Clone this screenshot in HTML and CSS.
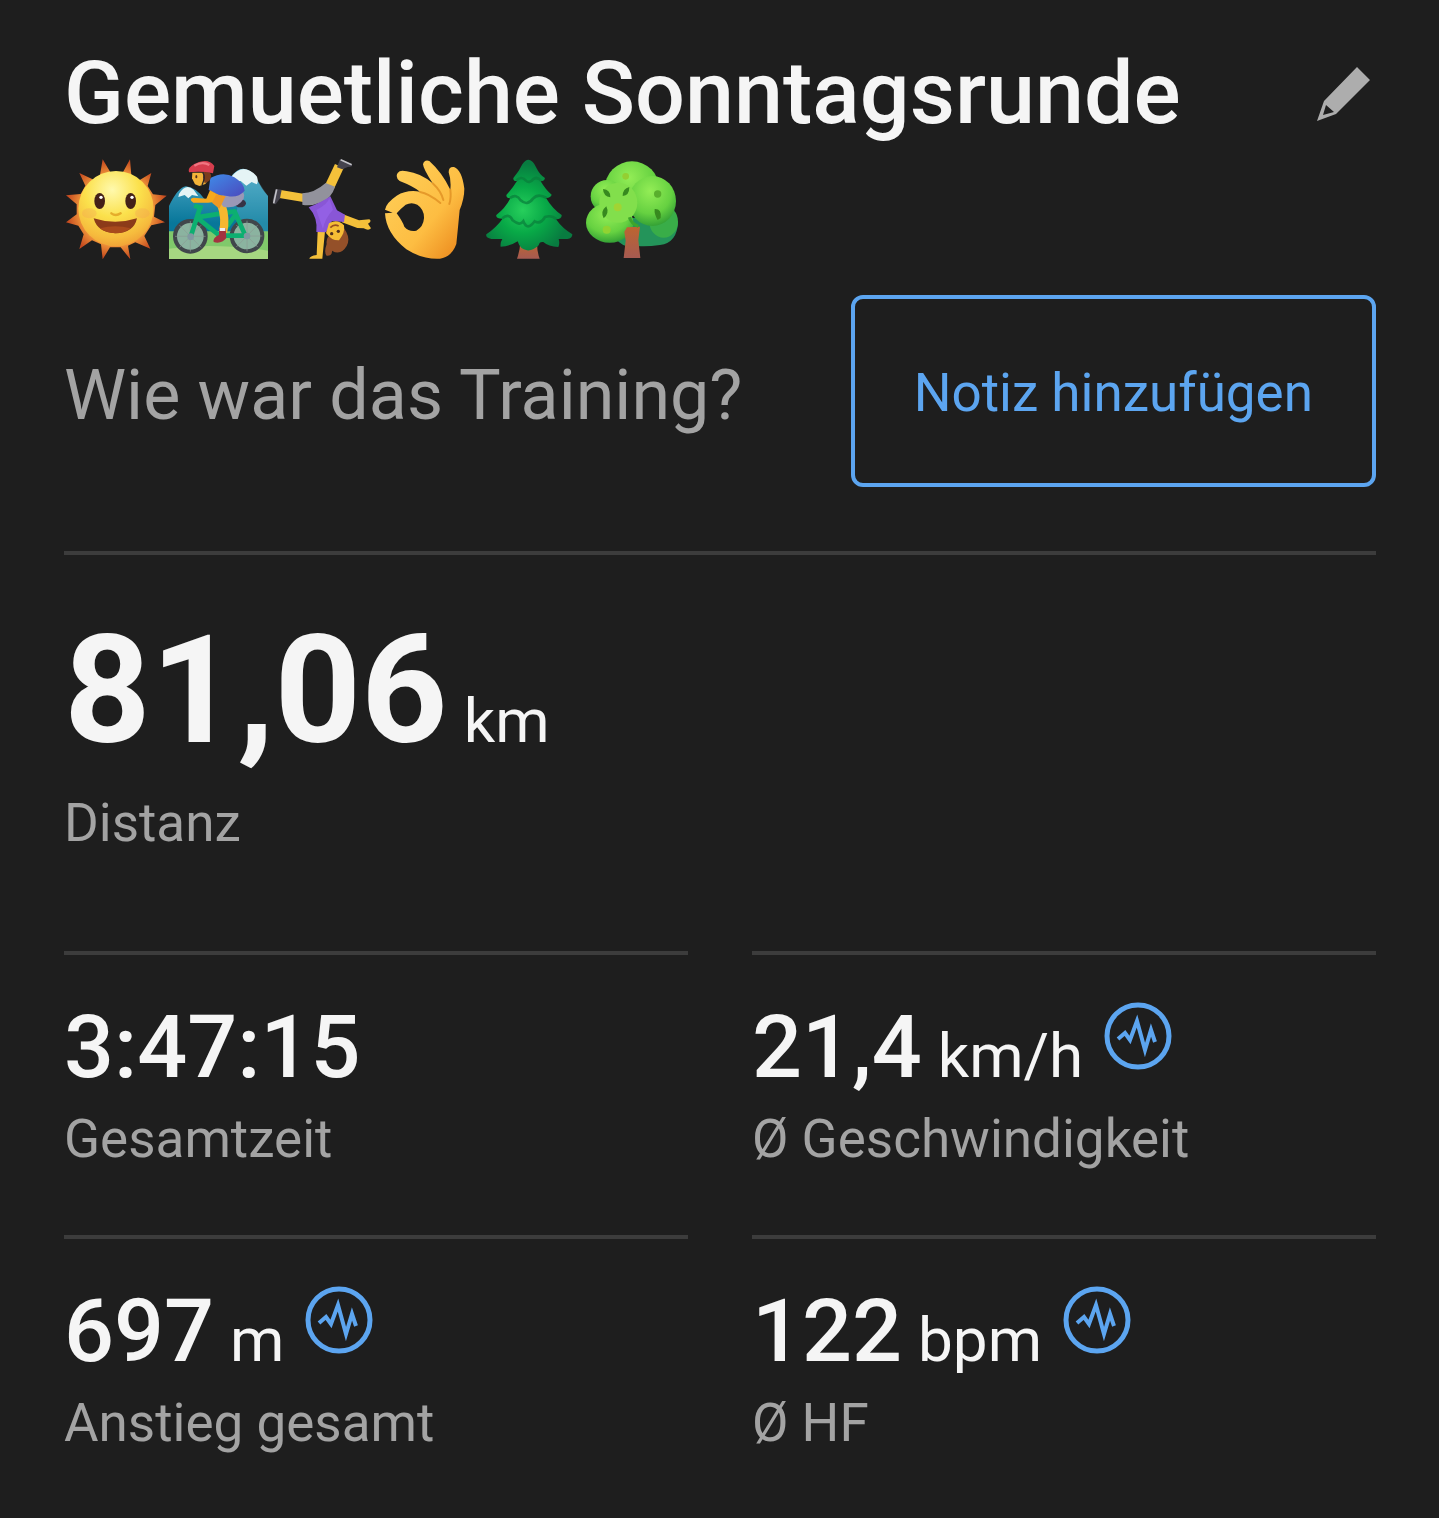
FILE: index.html
```html
<!DOCTYPE html>
<html lang="de">
<head>
<meta charset="utf-8">
<meta name="viewport" content="width=device-width, initial-scale=1">
<title>Gemuetliche Sonntagsrunde</title>
<link rel="stylesheet" href="styles.css">
</head>
<body>
<svg class="defs" aria-hidden="true">
  <defs>
    <radialGradient id="sun" cx=".45" cy=".25" r=".8"><stop offset="0" stop-color="#fff9ad"/><stop offset=".45" stop-color="#fbe14c"/><stop offset=".8" stop-color="#f6bb3d"/><stop offset="1" stop-color="#ee9a35"/></radialGradient>
    <radialGradient id="rays" cx=".5" cy=".5" r=".5"><stop offset=".7" stop-color="#f39a3c"/><stop offset="1" stop-color="#c4491f"/></radialGradient>
    <linearGradient id="mountain" x1="0" y1="0" x2="0" y2="1"><stop offset="0" stop-color="#4fa9c8"/><stop offset=".6" stop-color="#08779a"/></linearGradient>
    <linearGradient id="shirt" x1="0" y1="0" x2="1" y2="1"><stop offset="0" stop-color="#3f8be8"/><stop offset="1" stop-color="#4b49bd"/></linearGradient>
    <linearGradient id="hand" x1="0" y1="0" x2="1" y2="1"><stop offset="0" stop-color="#ffd25c"/><stop offset=".6" stop-color="#fdbd42"/><stop offset="1" stop-color="#e98218"/></linearGradient>
    <radialGradient id="fir" gradientUnits="userSpaceOnUse" cx="140" cy="180" r="140"><stop offset="0" stop-color="#27cf5c"/><stop offset=".5" stop-color="#08a947"/><stop offset="1" stop-color="#087b40"/></radialGradient>
    <radialGradient id="leaf" cx=".45" cy=".3" r=".7"><stop offset="0" stop-color="#93ed56"/><stop offset=".65" stop-color="#66d141"/><stop offset="1" stop-color="#35a235"/></radialGradient>
    <linearGradient id="trunk" x1="0" y1="0" x2="0" y2="1"><stop offset="0" stop-color="#bd6530"/><stop offset="1" stop-color="#a65a51"/></linearGradient>
    <symbol id="pulse" viewBox="0 0 68 68">
      <g fill="none" stroke="#5ca5f0">
        <circle cx="34" cy="34" r="31" stroke-width="5"/>
        <path d="M14 37L21 31 26 38 33 19 41 48 47 28 51 40" stroke-width="4" stroke-miterlimit="8"/>
      </g>
    </symbol>
  </defs>
</svg>

<main class="workout">
  <header class="head">
    <div class="heading">
      <h1 class="title">Gemuetliche Sonntagsrunde</h1>
      <div class="emojis">
        <svg class="emoji" viewBox="12 18 309 312" role="img" aria-label="Sonne mit Gesicht">
          <path fill="url(#rays)" d="M128 28L152 68 188 68 210 28 214 76 238 91 274 69 263 108 279 133 320 137 286 165 282 200 315 217 274 226 253 258 271 296 226 277 204 287 211 328 182 292 150 292 128 328 123 283 96 271 58 297 71 253 55 227 18 217 50 193 50 163 18 136 62 132 76 107 58 69 101 89 120 75Z"/>
          <circle cx="168" cy="176" r="113" fill="url(#sun)"/>
          <ellipse cx="88" cy="190" rx="22" ry="15" fill="#f2a055" opacity=".3"/><ellipse cx="247" cy="190" rx="22" ry="15" fill="#f2a055" opacity=".3"/>
          <ellipse cx="119" cy="153" rx="16" ry="24" fill="#432018"/><ellipse cx="212" cy="153" rx="16" ry="24" fill="#432018"/>
          <circle cx="123" cy="142" r="5" fill="#fff"/><circle cx="216" cy="142" r="5" fill="#fff"/>
          <path d="M154 190q13 10 28 0" fill="none" stroke="#e5ad2b" stroke-width="7" stroke-linecap="round"/>
          <path d="M101 205Q165 226 231 205Q222 249 166 250Q112 248 101 205Z" fill="#8c3b19"/>
          <path d="M120 235Q166 222 211 235Q195 250 166 250Q136 249 120 235Z" fill="#a84a1c"/>
        </svg>
        <svg class="emoji" viewBox="9 18 309 312" role="img" aria-label="Mountainbiker">
          <path fill="url(#mountain)" d="M15 168Q42 112 66 109Q96 112 122 148Q165 137 200 82Q233 34 273 76Q293 119 312 138V327H15Z"/>
          <path fill="#79c8d8" opacity=".25" d="M238 64L214 210 312 250V138Q285 100 273 76Z"/>
          <path fill="#e5f4f5" d="M202 80Q239 34 279 80Q284 97 278 103L263 96 247 107 230 93 211 92ZM45 132Q65 98 89 119L103 139 84 135 73 145 62 135 43 141Z"/>
          <path fill="#80c96b" d="M15 244H312V327H15Z"/><path fill="#a6d781" d="M15 296Q150 278 312 302V327H15Z"/>
          <circle cx="79" cy="259" r="46" fill="#8bb3a0" stroke="#40464b" stroke-width="12"/><circle cx="249" cy="258" r="46" fill="#8bb3a0" stroke="#40464b" stroke-width="12"/>
          <path d="M79 213V305M33 259H125M47 226L111 292M111 226L47 292M249 212V304M203 258H295M217 225L281 291M281 225L217 291" stroke="#8b9b94" stroke-width="2"/>
          <path d="M80 260L109 170M98 202L168 258 215 194M98 202L212 184 244 257H170M90 167L116 174" fill="none" stroke="#0caf70" stroke-width="14" stroke-linejoin="round"/>
          <ellipse cx="229" cy="160" rx="17" ry="12" fill="#373346"/><circle cx="80" cy="260" r="10" fill="#8199a1"/><circle cx="249" cy="258" r="10" fill="#8199a1"/>
          <path d="M206 150Q179 150 172 164Q187 206 177 246" fill="none" stroke="#f6b72f" stroke-width="25"/>
          <path d="M180 128Q250 108 239 146Q220 178 178 170Q160 154 180 128Z" fill="#9a98b6"/>
          <path d="M139 84Q178 62 211 82Q240 100 242 122Q222 145 190 138L161 134 134 120Z" fill="url(#shirt)"/>
          <path d="M138 121L163 134Q162 158 132 158L88 158Q72 147 88 143L127 146Z" fill="#f6a91d"/><path d="M157 133L185 139 166 176 144 158Z" fill="#ee9925"/>
          <path d="M85 68H130L134 88 124 102 106 108 93 103 84 85Z" fill="#f4b439"/><path d="M120 66Q152 64 136 92L122 100 117 82Z" fill="#7b3d1d"/>
          <ellipse cx="97" cy="80" rx="3" ry="5" fill="#51301e"/>
          <path d="M75 67Q70 53 91 42Q132 21 151 48L147 70Q113 63 75 67Z" fill="#d63e4e"/><path d="M91 47Q115 33 136 45" fill="none" stroke="#f07682" stroke-width="7"/>
          <path d="M116 67Q126 80 114 105" fill="none" stroke="#26242b" stroke-width="4"/>
          <path d="M165 235H185L187 264Q172 283 149 276Q145 264 165 254Z" fill="#a33440"/><path d="M167 234H184V243H167Z" fill="#eee"/>
        </svg>
        <svg class="emoji" viewBox="6 18 309 312" role="img" aria-label="Radschlagende Person">
          <path d="M185 110L214 48" stroke="#f4c13a" stroke-width="29"/><path d="M108 144L36 132" stroke="#f4c13a" stroke-width="25"/>
          <path d="M103 130Q139 129 173 99L201 110Q191 146 156 158Q125 170 103 164Z" fill="#92929c"/>
          <path d="M207 52L216 28 251 42Q257 51 239 51L223 58Z" fill="#45434d"/><path d="M218 29L251 44" stroke="#c4c4c9" stroke-width="5"/>
          <path d="M41 119L36 145 23 163Q12 162 15 147L23 117Z" fill="#45434d"/><path d="M26 118L17 160" stroke="#c4c4c9" stroke-width="5"/>
          <path d="M225 193L273 211 304 208Q313 214 300 221L309 235Q302 243 287 235L268 234 222 217Z" fill="#f4c03a"/>
          <path d="M149 244H171L163 326H124Q125 318 146 315Z" fill="#f4c03a"/>
          <path d="M122 172Q162 156 187 139L207 181 231 194 228 216 192 213 174 247 145 246Q150 203 122 172Z" fill="#8956d6"/><path d="M145 180Q178 164 184 145L195 179Q169 207 165 237Z" fill="#9a68ec" opacity=".6"/>
          <path d="M218 224Q252 258 236 288Q218 318 192 302Q193 319 176 317Q167 308 176 282Q173 259 193 252Z" fill="#945029"/>
          <path d="M183 220Q208 205 228 226Q232 248 213 271Q190 272 174 249Z" fill="#f6bd35"/>
          <circle cx="191" cy="251" r="5" fill="#51301e"/><circle cx="211" cy="244" r="5" fill="#51301e"/><path d="M187 233Q198 221 212 228" fill="none" stroke="#9b4f20" stroke-width="5"/>
        </svg>
        <svg class="emoji" viewBox="3 18 309 312" role="img" aria-label="OK-Hand">
          <path fill="url(#hand)" fill-rule="evenodd" d="M39 179Q42 159 74 137Q105 118 144 125Q122 108 83 93Q69 82 77 69Q84 58 104 64Q145 69 182 100Q154 57 153 43Q157 28 172 33Q210 67 235 119Q238 91 230 67Q230 49 246 51Q270 60 277 116Q277 146 263 180Q259 223 253 282Q239 321 204 326Q151 329 103 298Q42 250 39 190L62 188ZM74 190Q88 174 101 164Q119 155 136 164Q157 178 156 205Q154 231 133 242Q112 247 97 230Q91 213 74 190Z"/>
          <path d="M144 126Q170 130 205 159M182 100Q207 123 214 150M235 119Q238 144 232 162" fill="none" stroke="#de8c20" stroke-width="6" stroke-linecap="round" opacity=".75"/>
        </svg>
        <svg class="emoji" viewBox="0 18 309 312" role="img" aria-label="Tanne">
          <path d="M133 275H183Q183 307 191 326H123Q132 302 133 275Z" fill="url(#trunk)"/>
          <path fill="url(#fir)" d="M158 29Q171 30 181 53Q191 74 207 84Q205 94 194 94Q210 121 227 134Q225 143 210 144Q230 177 257 195Q258 206 240 208Q259 235 289 253Q289 265 274 267H248Q252 280 247 291Q217 289 202 276Q190 274 188 286Q171 303 153 301Q132 298 125 274Q102 289 74 290Q72 278 79 267H46Q28 264 31 253Q61 232 80 206Q58 206 61 195Q88 174 103 145Q91 145 91 135Q109 116 123 93Q111 94 112 84Q129 65 139 43Q147 29 158 29Z"/>
          <path d="M121 91Q137 77 149 91Q160 102 171 88Q183 78 196 93M102 144Q121 130 134 151Q154 169 171 146Q186 129 212 144M79 205Q99 188 110 211Q132 229 142 214Q154 244 176 214Q194 224 207 201Q227 194 242 208" fill="none" stroke="#087e3b" stroke-width="8" opacity=".7"/>
        </svg>
        <svg class="emoji" viewBox="9 18 309 312" role="img" aria-label="Laubbaum">
          <path fill="#24945a" d="M118 204H268L306 215Q304 278 252 285Q212 291 184 288Q145 299 118 265Z"/>
          <circle cx="168" cy="116" r="82" fill="url(#leaf)"/><circle cx="93" cy="139" r="49" fill="url(#leaf)"/><ellipse cx="101" cy="218" rx="71" ry="60" fill="url(#leaf)"/>
          <ellipse cx="263" cy="215" rx="43" ry="48" fill="#39ad48"/><ellipse cx="229" cy="153" rx="71" ry="75" fill="url(#leaf)"/>
          <ellipse cx="127" cy="158" rx="57" ry="60" fill="#82df4c"/>
          <path d="M145 245L153 232 192 230 187 270 193 324H143L149 272Z" fill="url(#trunk)"/>
          <path d="M81 117Q104 119 103 142Q82 139 81 117ZM160 111Q140 116 140 138Q160 137 160 111ZM91 169Q72 184 83 205Q101 190 91 169ZM236 177Q258 176 254 204L245 210Q234 192 236 177Z" fill="#37891f"/>
          <circle cx="245" cy="132" r="11" fill="#59af2d"/><circle cx="149" cy="79" r="10" fill="#94cf32"/><circle cx="125" cy="172" r="12" fill="#a1d434"/><circle cx="92" cy="239" r="12" fill="#91d332"/><path d="M160 202Q167 223 187 229" fill="none" stroke="#3da52b" stroke-width="9"/>
        </svg>
      </div>
    </div>
    <button class="edit" type="button" aria-label="Bearbeiten">
      <svg class="pencil" viewBox="0 0 54 54" aria-hidden="true"><path fill="#adadad" fill-rule="evenodd" d="M40 0L53 13 19 47 0 54 7 34ZM9 38L6 48 17 45Z"/></svg>
    </button>
  </header>

  <section class="note">
    <h2 class="question">Wie war das Training?</h2>
    <button class="add-note" type="button">Notiz hinzufügen</button>
  </section>

  <section class="distance">
    <p class="value total">81,06 <span class="unit">km</span></p>
    <p class="label">Distanz</p>
  </section>

  <section class="stats">
    <div class="stat">
      <p class="value">3:47:15</p>
      <p class="label">Gesamtzeit</p>
    </div>
    <div class="stat">
      <div class="reading"><p class="value">21,4 <span class="unit">km/h</span></p><button class="chart" type="button" aria-label="Geschwindigkeit anzeigen"><svg class="pulse" aria-hidden="true"><use href="#pulse"/></svg></button></div>
      <p class="label">Ø Geschwindigkeit</p>
    </div>
    <div class="stat">
      <div class="reading"><p class="value">697 <span class="unit">m</span></p><button class="chart" type="button" aria-label="Anstieg anzeigen"><svg class="pulse" aria-hidden="true"><use href="#pulse"/></svg></button></div>
      <p class="label">Anstieg gesamt</p>
    </div>
    <div class="stat">
      <div class="reading"><p class="value">122 <span class="unit">bpm</span></p><button class="chart" type="button" aria-label="Herzfrequenz anzeigen"><svg class="pulse" aria-hidden="true"><use href="#pulse"/></svg></button></div>
      <p class="label">Ø HF</p>
    </div>
  </section>
</main>
</body>
</html>
```
FILE: styles.css
```css
* { box-sizing: border-box; }

body {
  margin: 0;
  background: #1e1e1e;
  color: #f5f5f5;
  font-family: Roboto, "Liberation Sans", sans-serif;
}

h1, h2, p { margin: 0; }

button {
  padding: 0;
  border: 0;
  background: none;
  font-family: inherit;
  cursor: pointer;
}

svg { display: block; }

.defs { position: absolute; width: 0; height: 0; }

.workout { padding: 40px 63px 0 64px; }

.head {
  display: flex;
  justify-content: space-between;
  align-items: flex-start;
}

.title {
  font-size: 88px;
  font-weight: 500;
  line-height: 106px;
}

.emojis { display: flex; padding-top: 10px; }

.emoji { width: 103px; height: 104px; }

.edit { padding: 27px 5px; }

.pencil { width: 54px; height: 54px; }

.note {
  display: flex;
  justify-content: space-between;
  align-items: center;
  padding: 35px 0 64px;
}

.question {
  padding-top: 8px;
  color: #a3a3a3;
  font-size: 70px;
  font-weight: 400;
  line-height: 84px;
}

.add-note {
  padding: 62px 59px 58px;
  border: 4px solid #5ca5f0;
  border-radius: 12px;
  color: #5ca5f0;
  font-size: 53px;
  line-height: 64px;
}

.distance {
  padding: 48px 0 96px;
  border-top: 4px solid #3c3c3c;
}

.value {
  display: flex;
  align-items: baseline;
  gap: 16px;
  font-size: 88px;
  font-weight: 500;
  line-height: 104px;
}

.total {
  margin-bottom: 12px;
  font-size: 151px;
  font-weight: 700;
  line-height: 176px;
}

.unit {
  font-size: 62px;
  font-weight: 400;
  line-height: 64px;
}

.label {
  color: #a3a3a3;
  font-size: 53px;
  line-height: 64px;
}

.stats {
  display: grid;
  grid-template-columns: 1fr 1fr;
  column-gap: 64px;
}

.stat {
  padding: 40px 0 64px;
  border-top: 4px solid #3c3c3c;
}

.stat .label { margin-top: 8px; }

.reading { display: flex; gap: 21px; }

.chart { align-self: flex-start; padding-top: 7px; }

.pulse { width: 68px; height: 68px; }
```
